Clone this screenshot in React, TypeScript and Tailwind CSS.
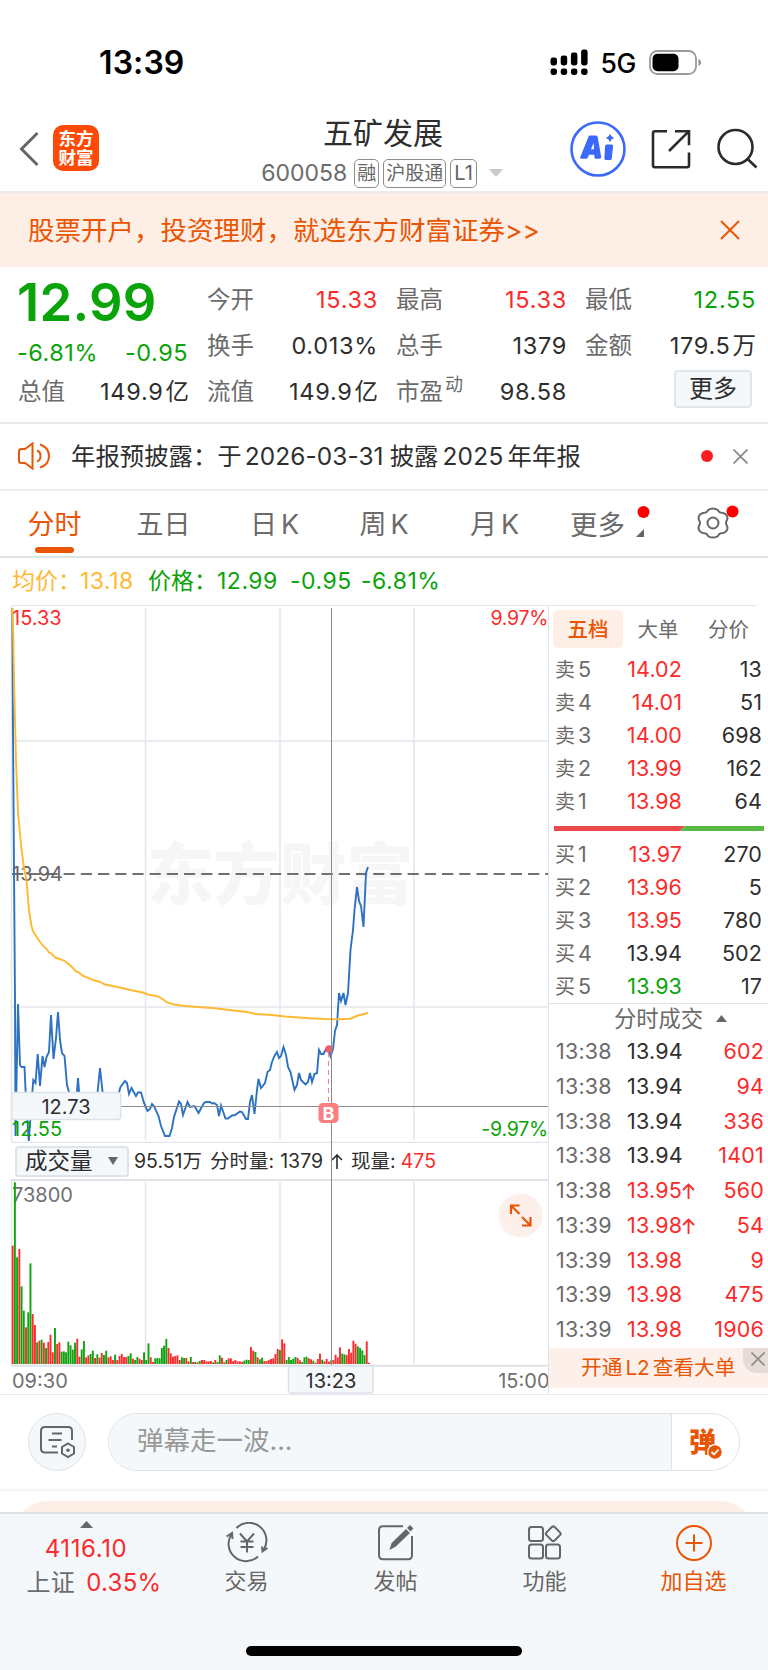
import type { ReactNode } from 'react';
import clsx from 'clsx';

const RED = 'text-[#fb2b2b]';
const GREEN = 'text-[#0aa30a]';
const INK = 'text-[#2e2e2e]';

const CJK = '[font-family:Inter,"Noto_Sans_CJK_SC",sans-serif]';

const quoteColumns = [
  [
    { label: '今开', value: '15.33', color: RED },
    { label: '换手', value: '0.013%', color: INK },
    { label: '流值', value: '149.9', unit: '亿', color: INK },
  ],
  [
    { label: '最高', value: '15.33', color: RED },
    { label: '总手', value: '1379', color: INK },
    { label: '市盈', sup: '动', value: '98.58', color: INK },
  ],
  [
    { label: '最低', value: '12.55', color: GREEN },
    { label: '金额', value: '179.5', unit: '万', color: INK },
  ],
];

const asks = [
  { label: '卖', level: 5, price: '14.02', qty: 13, color: RED },
  { label: '卖', level: 4, price: '14.01', qty: 51, color: RED },
  { label: '卖', level: 3, price: '14.00', qty: 698, color: RED },
  { label: '卖', level: 2, price: '13.99', qty: 162, color: RED },
  { label: '卖', level: 1, price: '13.98', qty: 64, color: RED },
];

const bids = [
  { label: '买', level: 1, price: '13.97', qty: 270, color: RED },
  { label: '买', level: 2, price: '13.96', qty: 5, color: RED },
  { label: '买', level: 3, price: '13.95', qty: 780, color: RED },
  { label: '买', level: 4, price: '13.94', qty: 502, color: INK },
  { label: '买', level: 5, price: '13.93', qty: 17, color: GREEN },
];

const trades = [
  { time: '13:38', price: '13.94', qty: 602, color: INK },
  { time: '13:38', price: '13.94', qty: 94, color: INK },
  { time: '13:38', price: '13.94', qty: 336, color: INK },
  { time: '13:38', price: '13.94', qty: 1401, color: INK },
  { time: '13:38', price: '13.95', qty: 560, color: RED, up: true },
  { time: '13:39', price: '13.98', qty: 54, color: RED, up: true },
  { time: '13:39', price: '13.98', qty: 9, color: RED },
  { time: '13:39', price: '13.98', qty: 475, color: RED },
  { time: '13:39', price: '13.98', qty: 1906, color: RED },
];

const pricePoints =
  '12.3,608 13,730 14,870 15,1000 15.5,1136 18,1004 20,1065 21.5,1067 24.5,1067 26,1100 28.8,1141 31,1110 33.3,1080 35.5,1083 37.7,1054 40,1086 42.5,1056 44.5,1067 46.5,1057 49,1052 51,1015 53.5,1059 56,1038 58,1012 60,1040 62,1053 64.5,1056 67,1085 69,1092 72,1108 76,1104 78,1078 80,1104 97,1098 100,1068 103,1096 110,1108 118,1096 120.5,1087 125,1081 127,1083 129,1094 131.5,1088 136,1096 138,1092.5 141,1092.5 144,1103 147.5,1111 150,1109 152,1104 154,1106 158.5,1116 161,1126 165,1136 169.5,1136 172,1128 174,1117 179,1101.5 181,1104 183,1115 187.5,1102 190,1107 194.5,1106 198.5,1113 204,1103 206,1102 210,1102 212,1103.5 214,1103 217,1105 219,1116 221,1105.5 225.5,1118.5 228,1118.5 232,1115.5 235,1115 240,1111.5 242,1112 246,1119 248,1119 250,1102 252,1095 254.5,1114 257,1090 258.5,1079 261,1088 265,1083 267.5,1072 270,1070 272,1062 274.5,1056 277,1052 279,1058 281,1056 283.5,1047 286,1055 288,1067 290.5,1072 294.5,1090 297,1085 299,1073 301,1080 305.5,1084.5 308,1082 310,1073 312,1082 314.5,1074 317,1073 319,1050 321,1054 323.5,1054 326,1049 329,1049 330.5,1056 333,1049 335,1031 337,1025 339,993 341,1001 343.5,993 345.5,1005 348,993 350.5,950 353,930 354.5,910 357,887 359,901 361,906 363.5,927 366,873 368,867';

const averagePoints =
  '12,608 13,625 14.5,700 16,760 18,812 21,845 24,868 26.5,880 29,911 31.5,926 33,931 38,939 42,944.5 47,949.5 49,952.5 51,953 55,957.5 58,958.5 64,960.5 71,966 76,971.5 79,972.5 83,976 86,977 93,980 100,982 105,984.5 120,987.5 130,990 143,992.5 148,994.5 158,996.3 161,998 167,1002.5 174,1004.5 185,1006 215,1008.3 225,1009.5 247,1012 256,1014 272,1015 285,1016.5 310,1018.3 325,1019 340,1019.3 350,1018.7 358,1015.5 368,1013';

// one entry per minute: direction + height
const volumes =
  'r355 g545 g320 r345 g233 g160 r110 g155 g302 r150 r117 g65 r70 g73 r64 g48 r66 r88 r35 g108 r60 r65 g37 g38 g35 g67 g56 g43 g64 r76 r22 g44 g69 r20 r26 g30 g40 r18 g29 r19 r33 g27 g40 r20 r23 r12 g28 r12 r24 r30 r21 r21 g24 g32 r16 g12 g21 r16 r12 g35 g12 g62 r20 r6 g17 g18 g17 g48 g55 g75 r48 r32 r22 r24 r26 r12 g20 g18 r18 r8 g21 r6 g6 r5 g9 r12 r12 r8 r8 r9 g5 r12 g6 g26 r19 r5 g12 r17 r17 r9 r12 r8 r8 r6 g10 g13 g12 r51 r40 g36 r20 g14 g19 r9 r9 r12 r15 r17 r30 r45 g42 r74 r62 g12 g21 g12 g16 g21 r18 r11 g6 g20 g22 r17 r14 g10 r4 r15 r31 g13 r8 r15 r7 g11 r12 r28 r20 r50 g31 g29 r27 r45 r34 r70 r61 g53 g48 g41 g27 r68 r4'
    .split(' ')
    .map((v) => ({ up: v[0] === 'r', height: Number(v.slice(1)) / 3 }));

function StatusBar() {
  return (
    <div className="flex h-[105px] items-start justify-between pl-[99px] pr-[66px] pt-[46px]">
      <span className="text-[32px] font-semibold leading-[33px] tracking-[0.1px] text-black">13:39</span>
      <div className="flex items-center pt-[2px]">
        <svg width="38" height="27" viewBox="0 0 38 27">
          {[9, 11, 14, 17].map((h, i) => (
            <g key={i}>
              <rect x={0.5 + i * 10.2} y={17.5 - h} width="6.5" height={h - 1} rx="2.4" />
              <rect x={0.5 + i * 10.2} y="19.5" width="6.5" height="6.5" rx="2.4" />
            </g>
          ))}
        </svg>
        <span className="ml-[12px] mr-[13px] mt-px text-[26.5px] font-medium leading-[28px] tracking-[-0.3px] text-black">5G</span>
        <svg width="53" height="26" viewBox="0 0 53 26">
          <rect x="1" y="1" width="46" height="23" rx="7.5" fill="none" stroke="#9a9a9a" strokeWidth="1.8" />
          <rect x="3.5" y="3.7" width="26" height="17.5" rx="5" />
          <path d="M49.5 9v7c1.800-.7 2.500-2 2.500-3.500s-.7-2.800-2.500-3.500z" fill="#8c8c8c" />
        </svg>
      </div>
    </div>
  );
}

function Tag({ children }: { children: ReactNode }) {
  return (
    <span className="flex h-[29px] items-center rounded-[5px] border-[1.5px] border-[#8d8d8d] px-[2px] text-[19px] leading-none text-[#666]">
      {children}
    </span>
  );
}

function Header() {
  return (
    <header className="grid h-[88px] grid-cols-[240px_1fr_240px] border-b-2 border-[#ececec]">
      <div className="flex items-start gap-[14px] pl-[19px] pt-[20px]">
        <svg width="20" height="46" viewBox="0 0 20 46" fill="none" stroke="#666" strokeWidth="3">
          <path d="M18.500 8L2.500 24l16 16" />
        </svg>
        <div className="grid h-[46px] w-[46px] place-content-center rounded-[10px] bg-[#ff4a05] text-center text-[17.5px] font-bold leading-[19px] text-white">
          <span>东方</span>
          <span>财富</span>
        </div>
      </div>
      <div className="flex flex-col items-center">
        <h1 className="mt-[10px] pr-[2px] text-[30px] leading-[36px] text-[#2e2e2e]">五矿发展</h1>
        <div className="mt-[8px] flex items-center gap-1 pr-1 text-[23px] leading-none text-[#6b6b6b]">
          <span className="mr-[3px]">600058</span>
          <Tag>融</Tag>
          <Tag>沪股通</Tag>
          <Tag>
            <span className="px-px text-[20px]">L1</span>
          </Tag>
          <svg width="14" height="8" viewBox="0 0 14 8" className="ml-2" fill="#c9c9c9">
            <path d="M0 0h14L7 8z" />
          </svg>
        </div>
      </div>
      <svg width="240" height="85" viewBox="528 105 240 85" fill="none" stroke="#2b2b2b">
        <circle cx="598" cy="149" r="26.500" stroke="#3a69fb" strokeWidth="2.600" />
        <g fill="#3a69fb" stroke="none">
          <path fillRule="evenodd" d="M589.500 135.500h6.500q1.500 0 1.700 1.500l3.500 20q.1 1.800-1.700 1.800h-3.400q-1.500 0-1.600-1.500l-.2-2.600h-5.300l-1 2.600q-.6 1.500-2.200 1.500h-4q-2.200 0-1.400-2l8-19.800q.4-1.500 1.100-1.500zM591 149.300h3l-.4-6.500z" />
          <path d="M606.500 144.500h5.200q1.500 0 1.400 1.500l-1.300 12.500q-.1 1.500-1.600 1.500h-4.400q-1.500 0-1.400-1.500l.7-12.500q.1-1.500 1.400-1.500z" />
          <path d="M610 133.800q1 3.300 4 4.200-3 .9-4 4.200-1-3.300-4-4.200 3-.9 4-4.200z" />
        </g>
        <g strokeWidth="2.600">
          <path d="M667 131.200h-12q-2 0-2 2v32q0 2 2 2h32q2 0 2-2v-12.700M675 131.200h14v14M669 151l19.500-19.300" />
          <circle cx="735.500" cy="147" r="17" />
          <path d="M747.500 159l9 8.500" />
        </g>
      </svg>
    </header>
  );
}

function Banner() {
  return (
    <div className="flex h-[74px] items-center justify-between bg-[#fdeee6] pl-[28px] pr-[28px] text-[#ea5504]">
      <span className="text-[26.500px] leading-none">股票开户，投资理财，就选东方财富证券&gt;&gt;</span>
      <svg width="20" height="20" viewBox="0 0 20 20" stroke="#ea5504" strokeWidth="2">
        <path d="M1 1l18 18M19 1L1 19" />
      </svg>
    </div>
  );
}

type QuoteItem = { label: string; sup?: string; value: string; unit?: string; color: string };

function QuoteRow({ label, sup, value, unit, color }: QuoteItem) {
  return (
    <div className="flex h-[46px] items-center justify-between">
      <span className="flex text-[#6b6b6b]">
        {label}
        {sup && <span className="-mt-[4px] ml-[2px] text-[18px]">{sup}</span>}
      </span>
      <span className={clsx('-mr-[1px]', color)}>
        <span className="tracking-[0.7px]">{value}</span>
        {unit && <span className="ml-[2px]">{unit}</span>}
      </span>
    </div>
  );
}

function Quote() {
  return (
    <section className="grid h-[157px] grid-cols-4 gap-[19px] border-b-2 border-[#e6e9ed] pl-[18px] pr-[13px] pt-px text-[23.5px] leading-none">
      <div>
        <div className="-ml-px flex h-[69px] items-center text-[52.5px] font-semibold tracking-[0.3px] text-[#0aa30a]">12.99</div>
        <div className="-ml-px flex h-8 items-center justify-between tracking-[0.5px] text-[#0aa30a]">
          <span>-6.81%</span>
          <span>-0.95</span>
        </div>
        <QuoteRow label="总值" value="149.9" unit="亿" color={INK} />
      </div>
      {quoteColumns.map((rows, i) => (
        <div key={i} className="pt-[9px]">
          {rows.map((row) => (
            <QuoteRow key={row.label} {...row} />
          ))}
          {i === 2 && (
            <div className="flex justify-end pr-[3px] pt-px">
              <button className="h-[38px] w-[78px] rounded-[4px] border-2 border-[#e1e6ea] bg-[#f5f8fa] text-[24px] leading-none text-[#2e2e2e]">
                更多
              </button>
            </div>
          )}
        </div>
      ))}
    </section>
  );
}

function Notice() {
  return (
    <div className="flex h-[68px] items-center border-b-2 border-[#eceef0] pl-[18px] pr-[20px]">
      <svg width="33" height="28" viewBox="0 0 33 28" fill="none" stroke="#ea5504" strokeWidth="2">
        <path d="M14.500 1.500v25L7 21H3.500Q1 21 1 18.500v-9Q1 7 3.500 7H7zM19 8.500q3.500 1.200 3.500 5.500T19 19.500M22 2.500q9 2.800 9 11.500t-9 11.500" />
      </svg>
      <span className="ml-[20px] flex-1 text-[24.4px] leading-none text-[#2e2e2e]">
        年报预披露：于<span className="ml-[3px] mr-[6px] tracking-[0.1px]">2026-03-31</span>披露
        <span className="ml-[4px] mr-[4px] tracking-[0.3px]">2025</span>年年报
      </span>
      <span className="mr-[20px] h-3 w-3 rounded-full bg-[#fb1e1e]" />
      <svg width="15" height="15" viewBox="0 0 15 15" stroke="#8c8c8c" strokeWidth="1.8">
        <path d="M.5.5l14 14M14.500.5l-14 14" />
      </svg>
    </div>
  );
}

function PeriodTabs() {
  return (
    <nav className="flex h-[67px] items-start border-b-2 border-[#dfe4e8] pt-[20px] text-[27px] leading-[28px] text-[#6b6b6b]">
      <div className="flex w-[109px] flex-col items-center text-[#ea5504]">
        分时
        <span className="mt-[8px] h-[6px] w-[39px] rounded-full bg-[#ea5504]" />
      </div>
      <span className="w-[109px] text-center">五日</span>
      <span className="w-[113px] text-center">日<span className="ml-1">K</span></span>
      <span className="w-[106px] text-center">周<span className="ml-1">K</span></span>
      <span className="w-[115px] text-center">月<span className="ml-1">K</span></span>
      <span className="ml-[18px] w-[54px] whitespace-nowrap text-[27.500px]">更多</span>
      <svg width="144" height="46" viewBox="624 502 144 46" className="-mt-[10px]" fill="none">
        <path d="M644 530v8h-8z" fill="#666" />
        <circle cx="643.500" cy="513" r="6" fill="#fe0000" />
        <path
          d="M713 509.500c4 0 5 1 6 3.200 1 1 2 1.200 4 1.300 3 .5 5.500 4 4 7-1.300 2-1.300 4 0 6 1.500 3-1 6.500-4 7-2 .1-3 .3-4 1.300-1 2.200-2 3.200-6 3.200s-5-1-6-3.200c-1-1-2-1.200-4-1.300-3-.5-5.500-4-4-7 1.300-2 1.300-4 0-6-1.500-3 1-6.500 4-7 2-.1 3-.3 4-1.300 1-2.200 2-3.200 6-3.200z"
          stroke="#666"
          strokeWidth="2"
          strokeLinejoin="round"
        />
        <circle cx="713" cy="524" r="5.500" stroke="#666" strokeWidth="2" />
        <circle cx="732.500" cy="512.500" r="6" fill="#fe0000" />
      </svg>
    </nav>
  );
}

function PriceChart() {
  return (
    <svg width="548" height="537" viewBox="0 606 548 537" className="block" fontSize="20">
      <text x="147" y="899" fontSize="66.500" fontWeight="900" fill="#f6f6f6">东方财富</text>
      <g stroke="#e3e6ed" strokeWidth="1.5">
        <path d="M11.500 606v536M145.500 608v532M280 608v532M414 608v532M12 741h536M12 1007h536M11 1142.500h537" fill="none" />
      </g>
      <path d="M12 874h536" stroke="#707070" strokeWidth="2" strokeDasharray="11.200 6" />
      <text x="12" y="624.700" fill="#fb2b2b">15.33</text>
      <text x="548" y="624.700" fontSize="19.500" letterSpacing="-0.3" textAnchor="end" fill="#fb2b2b">9.97%</text>
      <text x="12" y="881" fill="#666">13.94</text>
      <text x="548" y="1135.500" fontSize="19.500" letterSpacing="-0.2" textAnchor="end" fill="#0aa30a">-9.97%</text>
      <polyline points={pricePoints} fill="none" stroke="#2d72c2" strokeWidth="1.900" />
      <polyline points={averagePoints} fill="none" stroke="#fdb933" strokeWidth="1.900" />
      <text x="12" y="1135.500" fill="#0aa30a">12.55</text>
      <path d="M120 1106.500h428" stroke="#8c8c8c" />
      <path d="M328.500 1052v50" stroke="#fa7f7f" strokeDasharray="5 4" />
      <circle cx="329" cy="1049" r="3.700" fill="#f55b66" />
      <path d="M331.500 608v535" stroke="#8c8c8c" />
      <rect x="318.500" y="1103" width="20" height="20" rx="4.500" fill="#fa7f7f" />
      <text x="328.500" y="1119.500" fontSize="18" fontWeight="700" textAnchor="middle" fill="#fff">B</text>
      <rect x="11.700" y="1092.500" width="109" height="27" rx="3" fill="#f5f8fa" stroke="#dde2e8" strokeWidth="1.500" />
      <text x="66" y="1113.500" textAnchor="middle" fill="#2e2e2e">12.73</text>
    </svg>
  );
}

function VolumeHeader() {
  return (
    <div className="flex h-9 items-center pl-[15px] pt-px text-[19.5px] leading-none text-[#2e2e2e]">
      <div className="-mt-px flex h-[31px] w-[114px] items-center justify-between rounded-[4px] border-2 border-[#dfe4e8] bg-[#f5f8fa] pl-[8px] pr-[9px] text-[22.500px]">
        成交量
        <svg width="10" height="8" viewBox="0 0 10 8" fill="#666">
          <path d="M0 0h10L5 8z" />
        </svg>
      </div>
      <span className="ml-[5px]">95.51万</span>
      <span className="ml-2">分时量:</span>
      <span className="ml-[6px]">1379</span>
      <svg width="12" height="15" viewBox="0 0 12 15" className="ml-2" fill="none" stroke="#2e2e2e" strokeWidth="1.6">
        <path d="M6 15V1M1 6l5-5 5 5" />
      </svg>
      <span className="ml-2">现量:</span>
      <span className="ml-[5px] text-[#fb2b2b]">475</span>
    </div>
  );
}

function VolumeChart() {
  return (
    <svg width="548" height="215" viewBox="0 1179 548 215" className="block overflow-visible" fontSize="20">
      <g stroke="#e3e6ed" strokeWidth="1.500">
        <path d="M11.500 1180v186M145.500 1182v182M280 1182v182M414 1182v182" />
        <path d="M11 1180h537M11 1365.800h537" stroke="#dfe3e8" strokeWidth="2" />
      </g>
      <text x="12" y="1201.500" fill="#707070">73800</text>
      {volumes.map((v, i) => (
        <rect key={i} x={11.700 + i * 2.227} y={1364 - v.height} width="1.900" height={v.height} fill={v.up ? '#fb2b2b' : '#0fa30f'} />
      ))}
      <path d="M331.500 1143v222" stroke="#8c8c8c" />
      <circle cx="520.500" cy="1215.500" r="22" fill="#fdf0ea" />
      <path d="M511 1214v-8.500h8.500M511.500 1206l8 8M530.500 1217v8.500H522M530 1225l-8-8" fill="none" stroke="#ea5504" strokeWidth="2.200" />
      <text x="12" y="1388" fill="#707070">09:30</text>
      <text x="549.500" y="1388" textAnchor="end" fill="#707070">15:00</text>
      <rect x="288.500" y="1366" width="84.500" height="27" rx="3" fill="#f5f8fa" stroke="#dde2e8" strokeWidth="1.500" />
      <text x="331" y="1387.500" textAnchor="middle" fill="#2e2e2e">13:23</text>
    </svg>
  );
}

function DepthRow({ label, level, price, qty, color }: (typeof asks)[number]) {
  return (
    <div className="grid h-[32.9px] grid-cols-[42px_85px_1fr] items-center pl-[6px] pr-[6px]">
      <span className="flex items-baseline gap-[3px] text-[#6b6b6b]">
        <span className="text-[20px]">{label}</span>
        {level}
      </span>
      <span className={clsx('text-right tracking-[0.1px]', color)}>{price}</span>
      <span className="text-right tracking-[0.1px] text-[#2e2e2e]">{qty}</span>
    </div>
  );
}

function OrderBook() {
  return (
    <aside className="h-[788px] w-[220px] border-l-[1.500px] border-[#dfe3ea] text-[21.5px] leading-none">
      <div className="flex h-[47px] pl-[4px] pt-1 text-[20.5px] text-[#6b6b6b]">
        <span className="flex h-[38px] w-[70px] items-center justify-center rounded-[5px] bg-[#fdeee6] pt-px font-medium text-[#ea5504]">五档</span>
        <span className="flex h-[38px] w-[70px] items-center justify-center pt-[2px]">大单</span>
        <span className="flex h-[38px] w-[71px] items-center justify-center pt-[2px]">分价</span>
      </div>
      {asks.map((row) => (
        <DepthRow key={row.level} {...row} />
      ))}
      <div className="mt-[8.500px] h-[5px] pl-[5px]">
        <svg width="210" height="5" viewBox="0 0 210 5" className="block">
          <path d="M0 0h131l-5 5H0z" fill="#ec4a4a" />
          <path d="M131 0h79v5h-84z" fill="#5ab946" />
        </svg>
      </div>
      <div className="mt-[7.500px] h-[164px]">
        {bids.map((row) => (
          <DepthRow key={row.level} {...row} />
        ))}
      </div>
      <div className="flex h-[31px] items-center justify-center gap-[13px] border-t-[1.500px] border-[#dfe3ea] pl-[32px] pr-[8px] text-[22.300px] text-[#6b6b6b]">
        分时成交
        <svg width="11" height="7" viewBox="0 0 11 7" fill="#666">
          <path d="M0 7h11L5.500 0z" />
        </svg>
      </div>
      <div className="h-[314.500px] pt-[0.500px]">
        {trades.map((t, i) => (
          <div key={i} className="grid h-[34.800px] grid-cols-[71px_70px_1fr] items-center pl-[7px] pr-[4px] tracking-[0.200px]">
            <span className="text-[#6b6b6b]">{t.time}</span>
            <span className={clsx('flex items-center', t.color)}>
              {t.price}
              {t.up && (
                <svg width="13" height="16" viewBox="0 0 13 16" fill="none" stroke="#fb2b2b" strokeWidth="1.800">
                  <path d="M6.500 16V1.500M1 7l5.500-5.500L12 7" />
                </svg>
              )}
            </span>
            <span className="text-right text-[#fb2b2b]">{t.qty}</span>
          </div>
        ))}
      </div>
      <div className="relative flex h-10 items-center bg-[#fdf0ea] pl-[32px] text-[20.700px] text-[#ea5504]">
        开通<span className="mx-[3px]">L2</span>查看大单
        <span className="absolute right-0 top-0 flex h-[25px] w-[25px] items-center justify-center rounded-bl-[14px] bg-[#e6dbd6] pl-[4px] pb-[3px]">
          <svg width="14" height="14" viewBox="0 0 14 14" stroke="#8c8c8c" strokeWidth="1.600">
            <path d="M.5.5l13 13M13.500.5l-13 13" />
          </svg>
        </span>
      </div>
    </aside>
  );
}

function Composer() {
  return (
    <div className="flex h-[96px] items-center gap-[22px] border-b-2 border-[#f4f5f6] px-[28px]">
      <div className="flex h-[58px] w-[58px] items-center justify-center rounded-full border-[1.500px] border-[#dfe3e8] bg-[#f5f8fa]">
        <svg width="36" height="34" viewBox="0 0 36 34" fill="none" stroke="#666" strokeWidth="2">
          <path d="M19 27.500H6q-4 0-4-4V6q0-4 4-4h23q4 0 4 4v9M13 8.500h10M9.500 15h13M13 21.500h5" />
          <path d="M29 18.500l6 3.500v6.500l-6 3.500-6-3.500V22z" />
          <circle cx="29" cy="25.300" r="1.800" fill="#666" stroke="none" />
        </svg>
      </div>
      <div className="flex h-[58px] w-[632px] overflow-hidden rounded-full border-[1.500px] border-[#dfe3e8]">
        <div className="flex flex-1 items-center bg-[#f5f8fa] pb-1 pl-[28px] text-[26.500px] leading-none text-[#999]">弹幕走一波...</div>
        <div className="flex w-[68px] items-center border-l-[1.500px] border-[#dfe3e8] pl-[17px]">
          <span className="relative text-[27px] font-black leading-none text-[#ea5504]">
            弹
            <svg width="16" height="16" viewBox="0 0 16 16" className="absolute -bottom-[4px] -right-[7px]">
              <circle cx="8" cy="8" r="7.300" fill="#ea5504" stroke="#fff" strokeWidth="1.200" />
              <path d="M4.500 8l2.500 2.500 4.500-5" fill="none" stroke="#fff" strokeWidth="1.800" />
            </svg>
          </span>
        </div>
      </div>
    </div>
  );
}

const actions = [
  {
    label: '交易',
    icon: (
      <>
        <path d="M10.500 6A17.500 17.500 0 0 1 37.500 28M32 34.500A17.500 17.500 0 0 1 5.500 12M0.500 14.500l5.500-3.500.5 6M41.500 26l-5 3.500-.5-5" />
        <path d="M14 11.500l7 8 7-8M21 19.500v11M14.500 19.500h13M14.500 25h13" />
      </>
    ),
  },
  {
    label: '发帖',
    icon: (
      <>
        <path d="M28 4.200H8q-4 0-4 4v25q0 4 4 4h25q4 0 4-4V14" />
        <path d="M16 26l1.500-4.500L31 8.500l2.500 2.500L20 24zM33.500 6l1.500-1.500 2 2L35.500 8z" fill="#666" />
      </>
    ),
  },
  {
    label: '功能',
    icon: (
      <>
        <rect x="5" y="5" width="14" height="14" rx="2.500" />
        <rect x="5" y="22.500" width="14" height="14" rx="2.500" />
        <rect x="22" y="22.500" width="14" height="14" rx="2.500" />
        <rect x="23.500" y="6" width="11.500" height="11.500" rx="2" transform="rotate(45 29.250 11.750)" />
      </>
    ),
  },
  {
    label: '加自选',
    active: true,
    icon: (
      <>
        <circle cx="21" cy="21" r="17" />
        <path d="M21 12.500v17M12.500 21h17" />
      </>
    ),
  },
];

function BottomBar() {
  return (
    <footer className="flex h-[158px] flex-col justify-between border-t-2 border-[#dde1e5] bg-[#f5f8fa] pb-[14px]">
      <div className="flex leading-none">
        <div className="flex w-[172px] flex-col items-center pt-[7px] text-[24px] text-[#fb2b2b]">
          <svg width="13" height="7" viewBox="0 0 13 7" fill="#666">
            <path d="M0 7h13L6.500 0z" />
          </svg>
          <span className="mt-[9px] tracking-[0.600px]">4116.10</span>
          <span className="mt-[10px] flex gap-[11px] pl-[16px] tracking-[0.300px]">
            <span className="text-[#6b6b6b]">上证</span>0.35%
          </span>
        </div>
        {actions.map((a) => (
          <div
            key={a.label}
            className={clsx(
              'flex w-[149px] flex-col items-center pt-[8px] text-[22px]',
              a.active ? 'text-[#ea5504]' : 'text-[#666]',
            )}
          >
            <svg width="42" height="42" viewBox="0 0 42 42" fill="none" stroke="currentColor" strokeWidth="2">
              {a.icon}
            </svg>
            <span className="mt-[6px]">{a.label}</span>
          </div>
        ))}
      </div>
      <div className="mx-auto h-[10px] w-[276px] rounded-full bg-black" />
    </footer>
  );
}

export default function App() {
  return (
    <div className={clsx('flex h-[1670px] w-[768px] flex-col overflow-hidden bg-white', CJK)}>
      <StatusBar />
      <Header />
      <Banner />
      <Quote />
      <Notice />
      <PeriodTabs />
      <div className="flex h-[47px] items-center pl-[12px] text-[23px] leading-none tracking-[0.500px] text-[#0aa30a]">
        <span className="w-[68px] whitespace-nowrap tracking-normal text-[#fdb933]">均价：</span>
        <span className="w-[68px] text-[#fdb933]">13.18</span>
        <span className="w-[69px] whitespace-nowrap tracking-normal">价格：</span>
        <span className="w-[73px]">12.99</span>
        <span className="w-[71px]">-0.95</span>
        <span>-6.81%</span>
      </div>
      <div className="ml-[11px] mr-[11px] h-0 border-t border-[#e3e6ea]" />
      <div className="flex h-[788px]">
        <div className="w-[548px]">
          <PriceChart />
          <VolumeHeader />
          <VolumeChart />
        </div>
        <OrderBook />
      </div>
      <div className="h-0 border-t border-[#e6e9ec]" />
      <Composer />
      <div className="h-[21px] overflow-hidden px-[12px] pt-[10px]">
        <div className="h-20 rounded-[36px] bg-[#fdeee6]" />
      </div>
      <BottomBar />
    </div>
  );
}
